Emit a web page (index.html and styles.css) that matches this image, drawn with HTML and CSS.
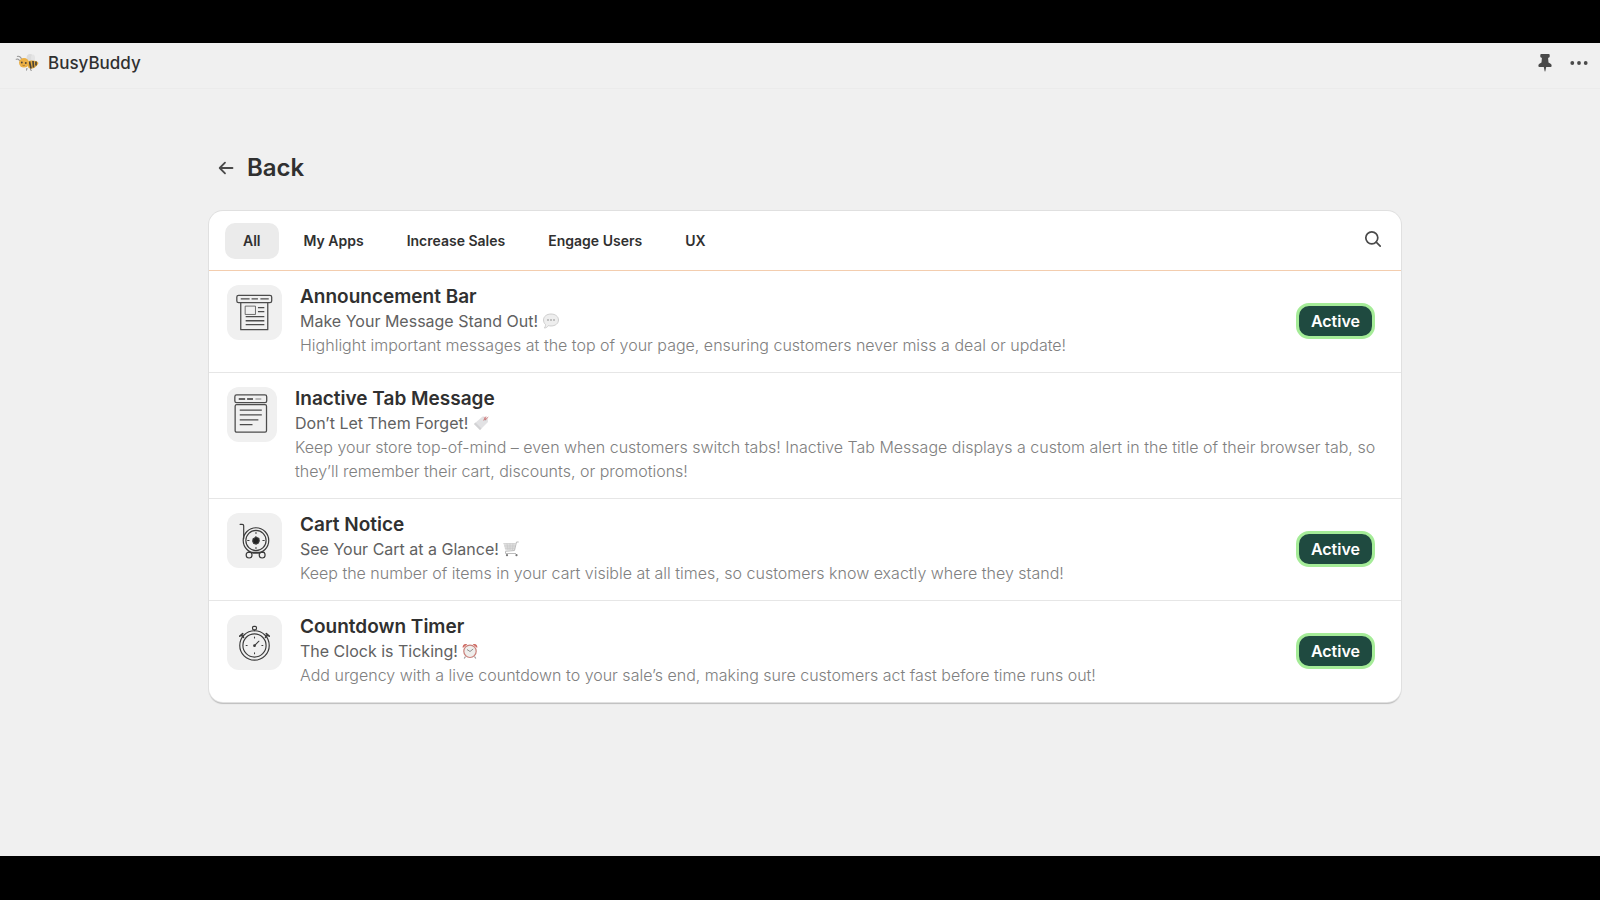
FILE: index.html
```html
<!DOCTYPE html>
<html lang="en">
<head>
<meta charset="utf-8">
<title>BusyBuddy</title>
<meta name="viewport" content="width=device-width, initial-scale=1">
<link rel="stylesheet" href="styles.css">
</head>
<body>
<div class="app">
  <header class="topbar">
    <svg class="bee" viewBox="0 0 24 18" aria-hidden="true">
      <ellipse cx="15" cy="4.500" rx="3.500" ry="4.500" fill="#dcdcdc"/>
      <ellipse cx="18" cy="4" rx="2" ry="3.500" fill="#e4e4e4"/>
      <path d="M7 6C6 3 4 1.500 2 2.500M5 7C3.500 5 2 4.500 .8 5.500" fill="none" stroke="#999" stroke-width="1.100"/>
      <path d="M12 8c4-2 9-2 11.500 1-2 4-6 7-10 5z" fill="#e5ab3c"/>
      <path d="M14.500 7.500l1.500 7M18 7l.5 6.500M21 7.500v4" stroke="#4a4338" stroke-width="1.700"/>
      <path d="M12 14l-.5 2.500M15.500 15l.8 2" stroke="#888" stroke-width="1"/>
      <ellipse cx="9" cy="8.800" rx="5" ry="4.800" fill="#ecb044"/>
      <circle cx="6.800" cy="8.500" r=".9" fill="#4a4338"/><circle cx="10.800" cy="9" r=".9" fill="#4a4338"/>
      <path d="M7.500 11.200q1.200.8 2.300.1" fill="none" stroke="#8a642c" stroke-width=".7"/>
    </svg>
    <span class="brand">BusyBuddy</span>
    <button class="icon-button" type="button" aria-label="Pin app">
      <svg width="14" height="18" viewBox="0 0 14 18"><path d="M3.300 0h7.400q1 0 1 1v1.400q0 .8-.8 1.200l-.8.400.4 4.400 2.100 1.400q1 .7 1 1.700v.5q0 1-1 1H8.200L7.400 17q-.4 1.200-.8 0l-.8-4H1.400q-1 0-1-1v-.5q0-1 1-1.700l2.100-1.400.4-4.400-.8-.4q-.8-.4-.8-1.200V1q0-1 1-1z" fill="#4a4a4a"/></svg>
    </button>
    <button class="icon-button" type="button" aria-label="More actions">
      <svg width="18" height="18" viewBox="0 0 18 18" fill="#4a4a4a"><circle cx="2.300" cy="9" r="1.900"/><circle cx="9" cy="9" r="1.900"/><circle cx="15.700" cy="9" r="1.900"/></svg>
    </button>
  </header>

  <main class="page">
    <div class="page-title">
      <button class="icon-button" type="button" aria-label="Go back">
        <svg width="16" height="16" viewBox="0 0 16 16" fill="none" stroke="#4a4a4a" stroke-width="1.800" stroke-linecap="round" stroke-linejoin="round"><path d="M14.500 8H2M7 2.700L1.700 8 7 13.300"/></svg>
      </button>
      <h1>Back</h1>
    </div>

    <section class="card">
      <nav class="tabs" aria-label="App categories">
        <button class="tab tab-selected" type="button">All</button>
        <button class="tab" type="button">My Apps</button>
        <button class="tab" type="button">Increase Sales</button>
        <button class="tab" type="button">Engage Users</button>
        <button class="tab" type="button">UX</button>
        <button class="icon-button search" type="button" aria-label="Search">
          <svg width="18" height="18" viewBox="0 0 18 18" fill="none" stroke="#4a4a4a" stroke-width="1.700" stroke-linecap="round"><circle cx="7.800" cy="7.800" r="6"/><path d="M12.200 12.200L16.200 16.200"/></svg>
        </button>
      </nav>

      <article class="row">
        <div class="tile">
          <svg viewBox="0 0 56 54" fill="none" stroke="#4c4c4c" stroke-width="1.300" stroke-linejoin="round">
            <rect x="10" y="9.500" width="35.500" height="7.500" rx="1.800"/>
            <path d="M14 13.200h9M25 13.200h6.500M34 13.200h8.500M14 17v27.500h27.500V17M31.500 22h6.500M31.500 26h6.500M19 31.200h19M19 35.400h19M19 39.400h19"/>
            <rect x="18.500" y="20.500" width="10.500" height="8.500" stroke-width=".8"/>
          </svg>
        </div>
        <div class="copy">
          <h2>Announcement Bar</h2>
          <p class="tagline">Make Your Message Stand Out!
            <svg class="emoji" viewBox="0 0 16 16" aria-hidden="true"><path d="M8 1c4.300 0 7.500 2.500 7.500 6S12.300 13 8 13c-1 0-1.800-.1-2.600-.4C4.300 14.200 3 15 1.300 15c.9-1 1.300-2.200 1.200-3.500C1.200 10.300.5 8.800.5 7c0-3.500 3.200-6 7.500-6z" fill="#eee" stroke="#c4c4c4" stroke-width=".8"/><g fill="#888"><circle cx="5" cy="7" r=".8"/><circle cx="8" cy="7" r=".8"/><circle cx="11" cy="7" r=".8"/></g></svg></p>
          <p class="description">Highlight important messages at the top of your page, ensuring customers never miss a deal or update!</p>
        </div>
        <button class="status" type="button">Active</button>
      </article>

      <article class="row row-wide">
        <div class="tile tile-narrow">
          <svg viewBox="0 0 51 54" fill="none" stroke="#4c4c4c" stroke-width="1.300" stroke-linejoin="round">
            <rect x="8" y="7" width="32.500" height="8" rx="1.800"/>
            <path d="M12 11.200h6.500M20.500 11.200h6" stroke="#333"/><path d="M29 11.200h6" stroke="#999"/>
            <rect x="8.300" y="17" width="32" height="28" rx="1.500"/>
            <path d="M13 22.500h22.500M13 27.400h22.500M13 32.400h19M13 37.400h13"/>
          </svg>
        </div>
        <div class="copy">
          <h2>Inactive Tab Message</h2>
          <p class="tagline">Don’t Let Them Forget!
            <svg class="emoji" viewBox="0 0 16 16" aria-hidden="true"><path d="M9.500 1.500l5 .5.500 5L7 15 1 9z" fill="#e2e2e4"/><path d="M1 9l6 6 1.500-1.500-6-6z" fill="#d2d2d4"/><circle cx="12" cy="4.500" r="1.100" fill="#aaa"/><path d="M10.500 5.500l2.500-4M12 5l3.300-3M10.800 2.500l2.500 2" fill="none" stroke="#d57474" stroke-width=".8"/></svg></p>
          <p class="description">Keep your store top-of-mind – even when customers switch tabs! Inactive Tab Message displays a custom alert in the title of their browser tab, so they’ll remember their cart, discounts, or promotions!</p>
        </div>
      </article>

      <article class="row">
        <div class="tile">
          <svg viewBox="0 0 56 54" fill="none" stroke="#3c3c3c" stroke-width="1.200" stroke-linecap="round">
            <path d="M13.300 10.500h2.200q1.500 0 1.500 1.500v13"/>
            <circle cx="29.500" cy="27" r="13"/><circle cx="29.500" cy="27" r="10.300"/>
            <path d="M29.500 18.500v1.500M29.500 34v1.500M21 27h1.500M36.500 27h1.500" stroke-width="1"/>
            <path d="M29.500 23.300l1.300 1 1.600.7.400 2.500-1 2.200-2.200 1-2.500-.9-.9-2.100.4-2.400 1.600-.9z" fill="#242424"/>
            <path d="M22 39h16"/>
            <circle cx="22.500" cy="41.800" r="3"/><circle cx="35.800" cy="41.800" r="3"/>
          </svg>
        </div>
        <div class="copy">
          <h2>Cart Notice</h2>
          <p class="tagline">See Your Cart at a Glance!
            <svg class="emoji" viewBox="0 0 16 16" aria-hidden="true"><path d="M.5 2.500h12l-1 6.500-9 .5z" fill="#dedede"/><path d="M.3 2.500h12.400M1.200 5h11M1.800 7.200h10M4 2.500l1 6.500M7 2.500V9M10 2.500L9.500 9" fill="none" stroke="#c4c4c4" stroke-width=".6"/><path d="M15.700 1h-2.200l-2 8.500-9 .8v2.200H13" fill="none" stroke="#b4b4b4" stroke-width=".9"/><circle cx="4" cy="14.200" r="1.100" fill="#777"/><circle cx="13.500" cy="14.200" r="1.100" fill="#777"/></svg></p>
          <p class="description">Keep the number of items in your cart visible at all times, so customers know exactly where they stand!</p>
        </div>
        <button class="status" type="button">Active</button>
      </article>

      <article class="row">
        <div class="tile">
          <svg viewBox="0 0 56 54" fill="none" stroke="#3c3c3c" stroke-width="1.200" stroke-linecap="round">
            <circle cx="28" cy="30" r="15"/><circle cx="28" cy="30" r="11.800"/>
            <path d="M28 21.500v1M28 37.500v1M19.500 30h1M35.500 30h1M28 30.200l4.500-4.500" stroke-width="1.100"/>
            <circle cx="28" cy="30.300" r=".8" fill="#3c3c3c"/>
            <rect x="26" y="10.500" width="4" height="3.500" rx="1.300"/><path d="M28 14.500v.5"/>
            <path d="M13 20.500l3-2.500M14.800 19.500l2 2.200M43 20.500L40 18M41.200 19.500l-2 2.200" stroke-width="1.700"/>
          </svg>
        </div>
        <div class="copy">
          <h2>Countdown Timer</h2>
          <p class="tagline">The Clock is Ticking!
            <svg class="emoji" viewBox="0 0 16 16" aria-hidden="true"><path d="M.8 5C0 2 2.500 0 5.300 1.300zM15.200 5c.8-3-1.700-5-4.500-3.700z" fill="#cf6a62"/><path d="M3.500 13.500L2.200 15.500M12.500 13.500l1.300 2" stroke="#999" stroke-width="1.200"/><circle cx="8" cy="8.300" r="6.200" fill="#eeeeec" stroke="#c9807a" stroke-width="1.200"/><path d="M5 6.500l3 2 3.200-2.500" fill="none" stroke="#777" stroke-width=".8"/></svg></p>
          <p class="description">Add urgency with a live countdown to your sale’s end, making sure customers act fast before time runs out!</p>
        </div>
        <button class="status" type="button">Active</button>
      </article>
    </section>
  </main>
</div>
</body>
</html>
```

FILE: styles.css
```css
* { box-sizing: border-box; }

body {
  margin: 0;
  min-height: 100vh;
  padding: 43px 0 44px;
  display: flex;
  background: #000;
  color: #303030;
  font-family: Inter, "Liberation Sans", sans-serif;
  font-size: 16px;
  line-height: 24px;
}

h1, h2, p { margin: 0; }

button {
  margin: 0;
  border: 0;
  background: none;
  color: inherit;
  font: inherit;
  cursor: pointer;
}

.icon-button { display: flex; padding: 0; }

.app { flex: 1; background: #f0f0f0; }

.topbar {
  display: flex;
  align-items: center;
  gap: 18px;
  height: 46px;
  padding: 0 12px 5px 15px;
  border-bottom: 1px solid #ebebeb;
}

.bee { width: 24px; height: 18px; margin-right: -9px; }

.brand {
  flex: 1;
  font-size: 17px;
  font-weight: 500;
}

.page {
  max-width: 1202px;
  margin: 0 auto;
  padding: 62px 0 40px 10px;
}

.page-title {
  display: flex;
  align-items: center;
  gap: 13px;
  padding-left: 9px;
  margin-bottom: 26px;
}

.page-title h1 {
  font-size: 24px;
  font-weight: 600;
  line-height: 34px;
}

.card {
  overflow: hidden;
  background: #fff;
  border-radius: 14px;
  box-shadow: 0 0 0 1px #e0e0e0, 0 2px 1px #bdbdbd;
}

.tabs {
  display: flex;
  align-items: center;
  gap: 7px;
  padding: 12px 19px 11px 16px;
  border-bottom: 1px solid #f3cdae;
}

.tab {
  padding: 6px 18px;
  border-radius: 10px;
  font-size: 14px;
  font-weight: 600;
}

.tab-selected { background: #ebebeb; }

.search { margin: 0 0 4px auto; }

.row {
  display: flex;
  align-items: flex-start;
  gap: 18px;
  padding: 14px 26px 15px 18px;
}

.row-wide { padding-right: 14px; }

.row + .row { border-top: 1px solid #e6e6e6; }

.tile {
  flex: none;
  width: 55px;
  height: 55px;
  border-radius: 12px;
  background: #f0f0f0;
}

.tile svg { display: block; width: 100%; height: 100%; }

.tile-narrow { width: 50px; }

.copy { flex: 1; }

.copy h2 {
  font-size: 19px;
  font-weight: 600;
  line-height: 24px;
}

.tagline { color: #616161; }

.emoji { width: 16px; height: 16px; vertical-align: -2px; }

.description { color: #808080; font-weight: 300; }

.status {
  align-self: center;
  padding: 3px 12px;
  border: 3px solid #a5ec98;
  border-radius: 13px;
  background: #1f4a40;
  color: #fff;
  font-weight: 600;
}
```
